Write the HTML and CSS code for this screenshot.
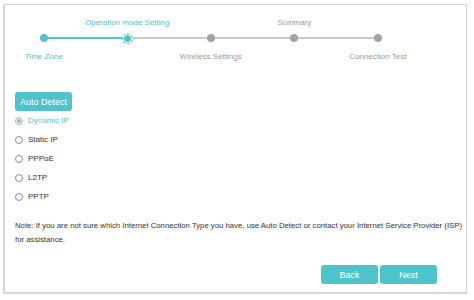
FILE: index.html
```html
<!DOCTYPE html>
<html lang="en">

<head>
    <meta charset="UTF-8">
    <meta name="viewport" content="width=device-width, initial-scale=1.0">
    <title>Quick Setup - Internet Connection Type</title>

    <link rel="stylesheet" href="styles.css">
</head>

<body>
    <div class="panel">
        <div class="stepper">
            <div class="step done">
                <span class="step-top"></span>
                <span class="step-point"><i class="dot"></i></span>
                <span class="step-bottom">Time Zone</span>
            </div>
            <div class="step current">
                <span class="step-top">Operation mode Setting</span>
                <span class="step-point"><i class="dot"></i></span>
                <span class="step-bottom"></span>
            </div>
            <div class="step">
                <span class="step-top"></span>
                <span class="step-point"><i class="dot"></i></span>
                <span class="step-bottom">Wireless Settings</span>
            </div>
            <div class="step">
                <span class="step-top">Summary</span>
                <span class="step-point"><i class="dot"></i></span>
                <span class="step-bottom"></span>
            </div>
            <div class="step">
                <span class="step-top"></span>
                <span class="step-point"><i class="dot"></i></span>
                <span class="step-bottom">Connection Test</span>
            </div>
        </div>

        <div class="content">
            <button class="btn btn-detect">Auto Detect</button>

            <ul class="radio-list">
                <li class="radio checked"><i class="radio-icon"></i>Dynamic IP</li>
                <li class="radio"><i class="radio-icon"></i>Static IP</li>
                <li class="radio"><i class="radio-icon"></i>PPPoE</li>
                <li class="radio"><i class="radio-icon"></i>L2TP</li>
                <li class="radio"><i class="radio-icon"></i>PPTP</li>
            </ul>

            <p class="note">Note: If you are not sure which Internet Connection Type you have, use Auto Detect or contact your Internet Service Provider (ISP) for assistance.</p>
        </div>

        <div class="actions">
            <button class="btn">Back</button>
            <button class="btn">Next</button>
        </div>
    </div>
</body>

</html>
```

FILE: styles.css
```css
:root {
    --teal: #4dc3cb;
    --grey-line: #c9c9c9;
    --grey-dot: #a2a3a9;
    --grey-text: #9a9a9a;
}

* {
    margin: 0;
    padding: 0;
    box-sizing: border-box;
}

body {
    padding: 4px 3px;
    font-family: "Liberation Sans", Arial, sans-serif;
    background: #fff;
}

.panel {
    width: 464px;
    height: 290px;
    border: 2px solid #d5d5d5;
    border-top-width: 1px;
    border-right-width: 1px;
    display: flex;
    flex-direction: column;
}

/* stepper */
.stepper {
    display: grid;
    grid-template-columns: repeat(5, 83.5px);
    margin-left: -3px;
    margin-top: 13px;
}

.step {
    display: flex;
    flex-direction: column;
    align-items: center;
    font-size: 8px;
    color: var(--grey-text);
}

.step-top,
.step-bottom {
    height: 10px;
    line-height: 10px;
    white-space: nowrap;
}

.step-point {
    position: relative;
    width: 100%;
    height: 12px;
    margin: 4px 0 8px;
    display: flex;
    justify-content: center;
    align-items: center;
}

.step-point::before,
.step-point::after {
    content: "";
    position: absolute;
    top: 5px;
    height: 2px;
    width: 50%;
    background: var(--grey-line);
}

.step-point::before {
    left: 0;
}

.step-point::after {
    right: 0;
}

.step:first-child .step-point::before,
.step:last-child .step-point::after {
    display: none;
}

.dot {
    position: relative;
    z-index: 1;
    width: 8px;
    height: 8px;
    border-radius: 50%;
    background: var(--grey-dot);
}

.step.done,
.step.current {
    color: var(--teal);
}

.step.done .dot,
.step.current .dot {
    background: var(--teal);
}

.step.done .step-point::after,
.step.current .step-point::before {
    background: var(--teal);
}

.step.current .dot {
    width: 7px;
    height: 7px;
    box-shadow: 0 0 0 2px #fff;
    outline: 1px dashed var(--teal);
    outline-offset: 1px;
}

/* form */
.content {
    padding: 30px 0 0 10px;
}

.btn {
    border: none;
    border-radius: 3px;
    background: var(--teal);
    color: #fff;
    font-family: inherit;
    font-size: 9px;
    height: 19px;
    cursor: pointer;
}

.btn-detect {
    width: 57px;
    display: block;
}

.radio-list {
    list-style: none;
}

.radio {
    height: 19px;
    display: flex;
    align-items: center;
    font-size: 8px;
    color: #333;
}

.radio.checked {
    color: var(--teal);
}

.radio-icon {
    width: 8px;
    height: 8px;
    border: 1px solid #8d8d8d;
    border-radius: 50%;
    margin-right: 5px;
    display: flex;
    justify-content: center;
    align-items: center;
}

.radio.checked .radio-icon {
    border-color: #b0b0b0;
}

.radio.checked .radio-icon::after {
    content: "";
    width: 4px;
    height: 4px;
    border-radius: 50%;
    background: #6cc3c9;
}

.note {
    margin-top: 13px;
    font-size: 7.75px;
    line-height: 14px;
    color: #333;
    width: 450px;
}

.actions {
    display: flex;
    justify-content: flex-end;
    gap: 2px;
    padding-right: 29px;
    margin-top: 18px;
}

.actions .btn {
    width: 57px;
}
```
